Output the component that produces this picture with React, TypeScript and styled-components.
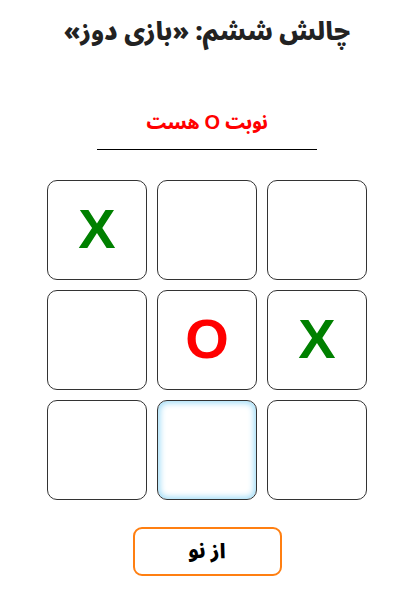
import React, { useState } from "react";
import styled, { createGlobalStyle } from "styled-components";

const Global = createGlobalStyle`
  html, body { margin: 0; padding: 0; background: #fff; }
  body { font-family: "Noto Sans Arabic", "DejaVu Sans", sans-serif; }
`;

const Page = styled.div`
  direction: rtl;
  width: 408px;
  box-sizing: border-box;
  padding: 10px 0 0 6px;
  display: flex;
  flex-direction: column;
  align-items: center;
`;

const Title = styled.h1`
  margin: 0;
  font-size: 24.5px;
  font-weight: 900;
  color: #222;
  line-height: 44px;
`;

const Status = styled.div`
  margin-top: 50px;
  font-size: 18px;
  font-weight: 900;
  color: #ff0000;
  line-height: 36px;
`;

const Mark = styled.span`
  font-family: "Liberation Sans", Arial, sans-serif;
  font-weight: bold;
  font-size: 20px;
`;

const Divider = styled.hr`
  width: 220px;
  margin: 8px 0 0;
  border: none;
  border-top: 1px solid #000;
`;

const Board = styled.div`
  direction: ltr;
  margin-top: 30px;
  display: grid;
  grid-template-columns: repeat(3, 100px);
  grid-auto-rows: 100px;
  gap: 10px;
`;

const Cell = styled.button<{ $mark: string; $focus?: boolean }>`
  box-sizing: border-box;
  width: 100px;
  height: 100px;
  padding: 0 0 4px;
  background: #fff;
  border: 1px solid #333;
  border-radius: 10px;
  font-family: "Liberation Sans", Arial, sans-serif;
  font-weight: bold;
  font-size: 56px;
  color: ${(p) => (p.$mark === "X" ? "#008000" : "#ff0000")};
  display: flex;
  align-items: center;
  justify-content: center;
  box-shadow: ${(p) => (p.$focus ? "inset 0 0 6px 2px #9fdcf7" : "none")};
  outline: none;
  cursor: pointer;
`;

const Reset = styled.button`
  margin-top: 27px;
  width: 149px;
  height: 49px;
  background: #fff;
  border: 2px solid #ff7f11;
  border-radius: 9px;
  font-family: "Noto Sans Arabic", "DejaVu Sans", sans-serif;
  font-weight: 900;
  font-size: 20px;
  color: #000;
  cursor: pointer;
`;

export default function App() {
  const [cells] = useState(["X", "", "", "", "O", "X", "", "", ""]);
  return (
    <>
      <Global />
      <Page>
        <Title>چالش ششم: «بازی دوز»</Title>
        <Status>
          نوبت <Mark>O</Mark> هست
        </Status>
        <Divider />
        <Board>
          {cells.map((c, i) => (
            <Cell key={i} $mark={c} $focus={i === 7}>
              {c}
            </Cell>
          ))}
        </Board>
        <Reset>از نو</Reset>
      </Page>
    </>
  );
}
